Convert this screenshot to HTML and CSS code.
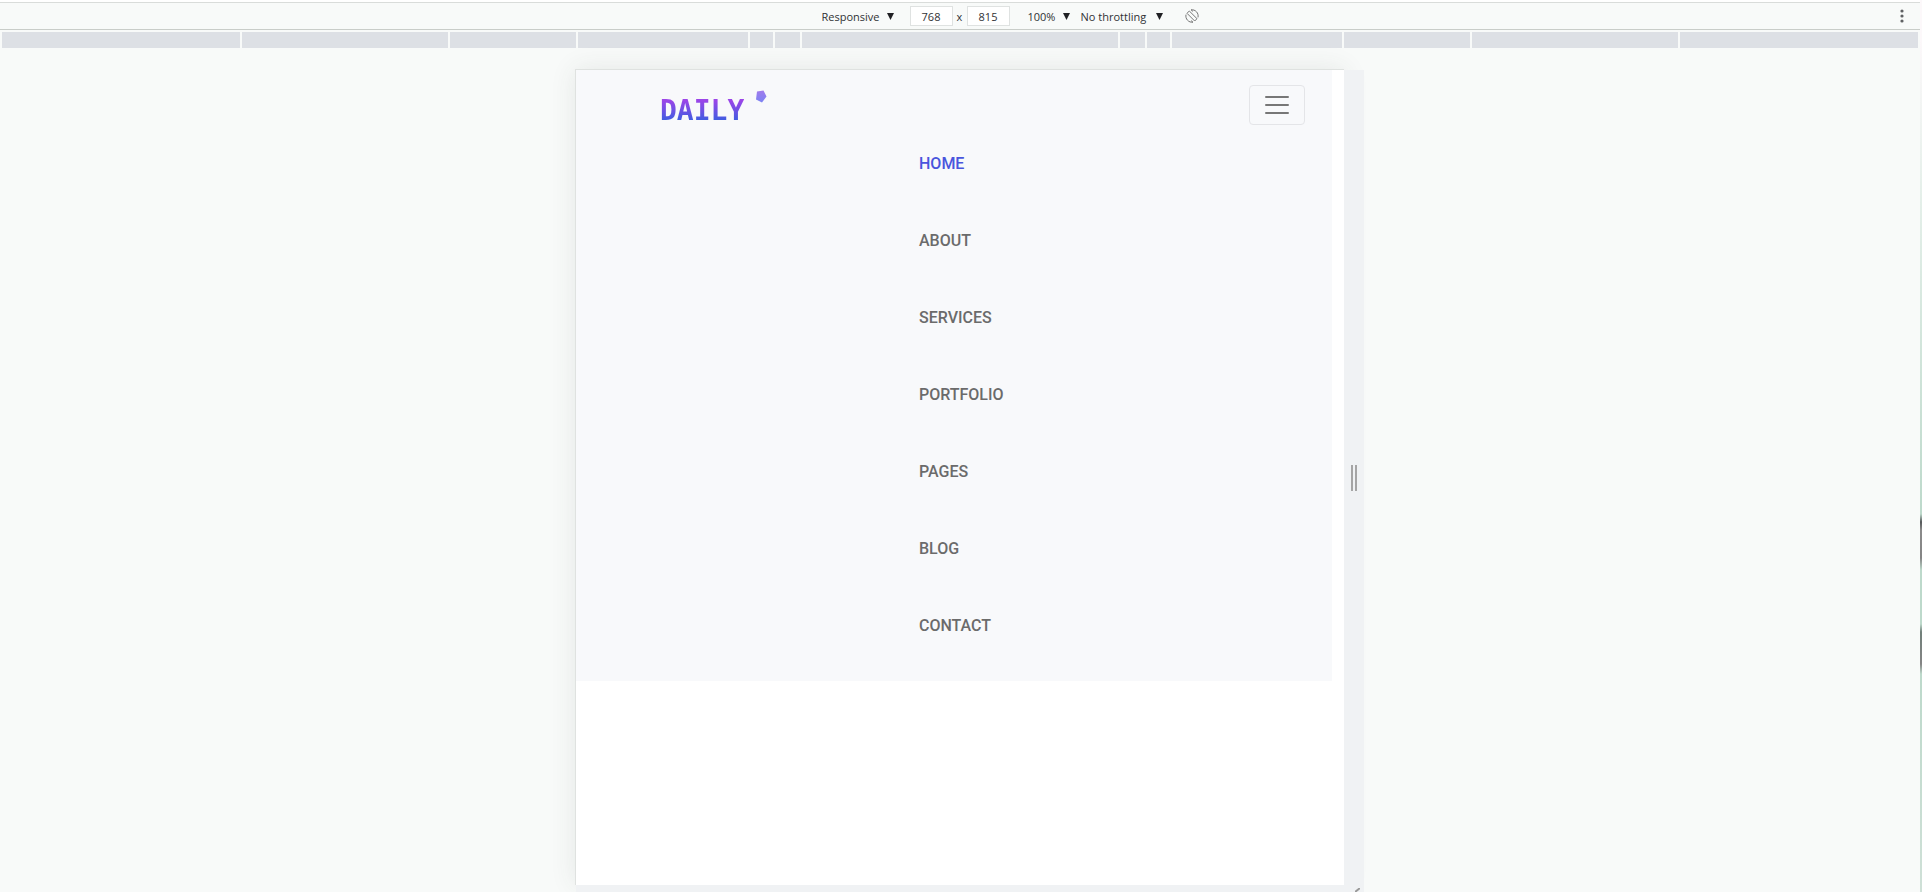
FILE: index.html
```html
<!DOCTYPE html>
<html lang="en">
<head>
<meta charset="utf-8">
<title>Daily</title>
<link rel="stylesheet" href="styles.css">
</head>
<body>
<div class="inspector">
  <form class="toolbar">
    <div class="controls">
      <label class="picker picker-device"><select aria-label="Device"><option>Responsive</option></select><svg class="caret" viewBox="0 0 7 7"><path d="M0 0h7L3.5 7z"/></svg></label>
      <div class="dimensions">
        <input class="size" aria-label="Width" value="768"><span class="times">x</span><input class="size" aria-label="Height" value="815">
      </div>
      <label class="picker picker-zoom"><select aria-label="Zoom"><option>100%</option></select><svg class="caret" viewBox="0 0 7 7"><path d="M0 0h7L3.5 7z"/></svg></label>
      <label class="picker picker-network"><select aria-label="Throttling"><option>No throttling</option></select><svg class="caret" viewBox="0 0 7 7"><path d="M0 0h7L3.5 7z"/></svg></label>
      <button class="icon-button rotate" type="button" aria-label="Rotate">
        <svg width="14" height="14" viewBox="0 0 14 14" fill="none" stroke="#777" stroke-width="1"><path d="M4.3 2 12 9.7 9.7 12 2 4.3zM6 .8a6.3 6.3 0 0 1 7 7.6M8 13.2a6.3 6.3 0 0 1-7-7.6M6 .8l2 1.6M8 13.2l-2-1.6"/></svg>
      </button>
    </div>
    <button class="icon-button more" type="button" aria-label="More options">
      <svg width="4" height="14" viewBox="0 0 4 14" fill="#5f6163"><circle cx="2" cy="2" r="1.6"/><circle cx="2" cy="7" r="1.6"/><circle cx="2" cy="12" r="1.6"/></svg>
    </button>
  </form>

  <div class="ruler">
    <i class="mark edge"></i><i class="mark laptop"></i><i class="mark tablet"></i><i class="mark large"></i><i class="mark medium"></i><i class="mark small"></i><i class="mark center"></i><i class="mark small"></i><i class="mark medium"></i><i class="mark large"></i><i class="mark tablet"></i><i class="mark laptop"></i><i class="mark edge"></i>
  </div>

  <main class="stage">
    <div class="device">
      <div class="screen">
        <header class="navbar">
          <div class="brand-row">
            <a class="brand" href="#"><span class="brand-name">DAILY</span><svg class="brand-mark" width="12" height="13" viewBox="0 0 12 13"><defs><linearGradient id="mark" x1="0" y1="0" x2="0" y2="1"><stop offset="0" stop-color="#a17bec"/><stop offset="1" stop-color="#7b83f3"/></linearGradient></defs><path fill="url(#mark)" d="M2 1.500 8.500.5 11.500 6.500 7 12.500 1 9.500z"/></svg></a>
            <button class="toggler" type="button" aria-label="Toggle navigation">
              <svg width="30" height="30" viewBox="0 0 30 30" stroke="#777" stroke-width="2" stroke-linecap="round"><path d="M4 7h22M4 15h22M4 23h22"/></svg>
            </button>
          </div>
          <nav class="menu">
            <a class="active" href="#">HOME</a>
            <a href="#">ABOUT</a>
            <a href="#">SERVICES</a>
            <a href="#">PORTFOLIO</a>
            <a href="#">PAGES</a>
            <a href="#">BLOG</a>
            <a href="#">CONTACT</a>
          </nav>
        </header>
      </div>
      <div class="side-handle"><svg width="6" height="26" viewBox="0 0 6 26" fill="#a5a5a5"><path d="M0 0h2v26H0zM4 0h2v26H4z"/></svg></div>
      <div class="bottom-handle"><svg width="5" height="4" viewBox="0 0 5 4" stroke="#999" stroke-width="2"><path d="M0 4l5-4"/></svg></div>
    </div>
  </main>
</div>
<div class="backdrop"></div>
</body>
</html>
```
FILE: styles.css
```css
* { box-sizing: border-box; }

body {
  margin: 0;
  min-height: 100vh;
  display: flex;
  background: #f8faf9;
  color: #303235;
  font-family: "Open Sans", "Noto Sans", sans-serif;
  font-size: 11px;
}

.inspector {
  flex: 1;
  min-width: 0;
  display: flex;
  flex-direction: column;
  border-top: 2px solid #fff;
}

.backdrop {
  width: 2px;
  background: linear-gradient(#fcf8fa 0, #fcf8fa 40px, #e4efe9 200px, #bdd9cb 514px, #55585a 522px, #8b8b8b 530px, #858585 558px, #bdd9cb 570px, #bdd9cb 624px, #71807a 632px, #858585 664px, #bdd9cb 674px, #cfe0d7 100%);
}

.toolbar {
  display: flex;
  align-items: center;
  height: 28px;
  border-top: 1px solid #d9dcda;
  border-bottom: 1px solid #c9cdc9;
}

.controls {
  flex: 1;
  display: flex;
  align-items: center;
  justify-content: center;
  padding-left: 120px;
}

.picker { display: flex; align-items: center; }

.picker select {
  appearance: none;
  flex: 1;
  min-width: 0;
  padding: 0;
  border: 0;
  background: none;
  color: inherit;
  font: inherit;
}

.picker-device { width: 72px; margin-right: 16px; }
.picker-zoom { width: 42px; margin: 0 11px 0 18px; }
.picker-network { width: 82px; margin-right: 22px; }

.caret { width: 7px; height: 7px; fill: #202124; }

.dimensions { display: flex; align-items: center; }

.size {
  width: 43px;
  height: 20px;
  padding: 0;
  border: 1px solid #dfe2e1;
  background: #fff;
  color: inherit;
  font: inherit;
  text-align: center;
}

.times { width: 14px; text-align: center; }

.icon-button {
  display: flex;
  padding: 0;
  border: 0;
  background: none;
}

.more { margin-right: 16px; }

.ruler {
  display: flex;
  gap: 2px;
  height: 18px;
  padding: 2px 2px 0;
}

.mark { background: #dde0e5; }
.edge { flex: 1; }
.laptop { width: 206px; }
.tablet { width: 126px; }
.large { width: 170px; }
.medium { width: 23px; }
.small { width: 25px; }
.center { width: 316px; }

.stage {
  flex: 1;
  display: flex;
  justify-content: center;
  padding: 21px 0 0 19px;
}

.device {
  display: grid;
  grid-template-columns: 769px 20px;
  grid-template-rows: 1fr 7px;
}

.screen {
  border-top: 1px solid #dfe2e0;
  border-left: 1px solid #dfe2e0;
  background: #fff;
  box-shadow: 0 0 24px rgba(60, 70, 60, .1);
}

.side-handle {
  z-index: 1;
  grid-row: 1 / 3;
  grid-column: 2;
  display: flex;
  align-items: center;
  justify-content: center;
  margin-top: 1px;
  padding-bottom: 6px;
  background: #f0f2f4;
}

.bottom-handle {
  z-index: 2;
  grid-row: 2;
  grid-column: 1 / 3;
  display: flex;
  align-items: flex-end;
  justify-content: flex-end;
  margin-left: 1px;
  padding-right: 4px;
  background: #f0f2f4;
}

.navbar {
  margin-right: 12px;
  padding: 15px 27px 17px 84px;
  background: #f8f9fb;
}

.brand-row {
  display: flex;
  align-items: flex-start;
  justify-content: space-between;
}

.brand {
  display: flex;
  align-items: flex-start;
  gap: 11px;
  padding-top: 5px;
  text-decoration: none;
}

.brand-name {
  padding-top: 7px;
  font: bold 28px/28px "DejaVu Sans Mono", monospace;
  background: linear-gradient(#9b45e8 30%, #3a5ee0 90%);
  background-clip: text;
  color: transparent;
}

.toggler {
  display: flex;
  align-items: center;
  justify-content: center;
  width: 56px;
  height: 40px;
  padding: 0;
  border: 1px solid #e4e5e8;
  border-radius: 4px;
  background: none;
}

.menu {
  display: flex;
  flex-direction: column;
  align-items: flex-start;
  padding-left: 259px;
}

.menu a {
  color: #6b6b6b;
  font: 500 16px/77px Roboto, sans-serif;
  text-decoration: none;
}

.menu .active { color: #4a55dd; }
```
